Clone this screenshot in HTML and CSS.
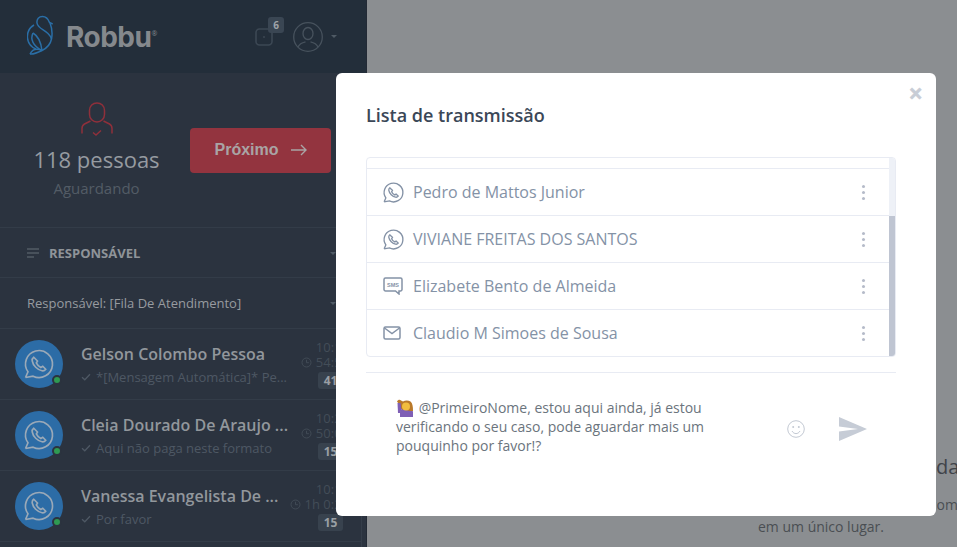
FILE: index.html
```html
<!DOCTYPE html>
<html>

<head>
    <title>Robbu</title>
    <link rel="stylesheet" href="styles.css">
</head>

<body>
    <svg class="defs" width="0" height="0">
        <symbol id="wa" viewBox="0 0 24 24">
            <path d="M3 21l1.65-3.8a9 9 0 1 1 3.4 2.9L3 21" />
            <path d="M8.500 7.500c-.8.6-1.200 1.400-1 2.500.5 3 3.500 6 6.500 6.500 1 .2 1.900-.2 2.500-1l-2-2-1.300.8c-1.300-.6-2.400-1.700-3-3l.8-1.300-2.500-2.500z" />
        </symbol>
        <symbol id="clock" viewBox="0 0 12 12">
            <circle cx="6" cy="6" r="4.9" />
            <path d="M6 3v3.2h2.6" />
        </symbol>
        <symbol id="check" viewBox="0 0 10 8">
            <path d="M1 4.2l2.8 2.6L9 1.2" />
        </symbol>
    </svg>

    <div class="app">
        <aside class="sidebar">
            <header class="top-bar">
                <svg class="logo-mark" viewBox="27 15 26 41" width="26" height="41">
                    <path d="M52.700 24L49.500 22.500C48 18.500 45.500 16.500 42.500 16.500C39 16.500 36.500 19 37 23C37.600 28 44 29.500 48 33.500C50 35.500 51 37 51.500 39" />
                    <path d="M50 23C52 28 52.500 34 51.500 39C50.500 44 47 48 42 50.500C38 52.500 34 54.500 30 54" />
                    <path d="M34 25C29 28 27 33 27.500 38C28 43 31 47 36 49" />
                    <path d="M33 33C30 39 33 46 42 50.500" />
                    <path d="M33 33C38 36 41 42 42 50.500" />
                    <path d="M30 54C32 50 36 48 42 50.500" />
                </svg>
                <span class="logo-text">Robbu</span><span class="logo-reg">®</span>
                <div class="top-actions">
                    <div class="tickets">
                        <svg viewBox="0 0 18 18" width="18" height="18">
                            <rect x="1" y="1" width="16" height="16" rx="3.500" />
                            <circle class="dot" cx="9" cy="9" r="0.800" />
                        </svg>
                        <span class="tickets-badge">6</span>
                    </div>
                    <svg class="user-icon" viewBox="0 0 30 30" width="30" height="30">
                        <circle cx="15" cy="15" r="14.300" />
                        <ellipse cx="15" cy="11.500" rx="5" ry="6" />
                        <path d="M5 25c1.500-3.500 4.500-4.500 7.500-5.200M25 25c-1.500-3.500-4.500-4.500-7.500-5.200" />
                    </svg>
                    <span class="caret"></span>
                </div>
            </header>

            <section class="summary">
                <div class="summary-info">
                    <svg class="person-icon" viewBox="0 0 32 36" width="32" height="36">
                        <path d="M16 1c-4.200 0-7.500 3-7.500 7.500v4c0 4 3.300 7.500 7.500 7.500s7.500-3.500 7.500-7.500v-4C23.500 4 20.200 1 16 1z" />
                        <path d="M9.500 19l-6 3C1.800 23 1 24.300 1 26.500v5M22.500 19l6 3c1.700 1 2.500 2.300 2.500 4.500v5" />
                        <path d="M12 30.500l3 2.500 5-4.500" />
                    </svg>
                    <div class="summary-count">118 pessoas</div>
                    <div class="summary-label">Aguardando</div>
                </div>
                <button class="next-btn">Próximo
                    <svg viewBox="0 0 16 12" width="16" height="12">
                        <path d="M0 6h15M10 1l5 5-5 5" />
                    </svg>
                </button>
            </section>

            <div class="filter-head">
                <svg viewBox="0 0 12 10" width="12" height="10">
                    <path d="M0 1h12M0 5h12M0 9h7" />
                </svg>
                <span class="filter-title">RESPONSÁVEL</span>
                <span class="caret"></span>
            </div>
            <div class="filter-value">
                <span>Responsável: [Fila De Atendimento]</span>
                <span class="caret"></span>
            </div>

            <div class="chat-list">
                <div class="chat-row">
                    <div class="avatar">
                        <svg class="wa-icon" width="36" height="36"><use href="#wa" /></svg>
                        <span class="online"></span>
                    </div>
                    <div class="chat-main">
                        <div class="chat-name">Gelson Colombo Pessoa</div>
                        <div class="chat-msg"><svg class="check" width="10" height="8"><use href="#check" /></svg><span>*[Mensagem Automática]* Pe...</span></div>
                    </div>
                    <div class="chat-meta">
                        <div class="chat-time">10:18</div>
                        <div class="chat-wait"><svg class="clock" width="11" height="11"><use href="#clock" /></svg>54:51</div>
                        <div class="chat-badge">41</div>
                    </div>
                </div>
                <div class="chat-row">
                    <div class="avatar">
                        <svg class="wa-icon" width="36" height="36"><use href="#wa" /></svg>
                        <span class="online"></span>
                    </div>
                    <div class="chat-main">
                        <div class="chat-name">Cleia Dourado De Araujo ...</div>
                        <div class="chat-msg"><svg class="check" width="10" height="8"><use href="#check" /></svg><span>Aqui não paga neste formato</span></div>
                    </div>
                    <div class="chat-meta">
                        <div class="chat-time">10:23</div>
                        <div class="chat-wait"><svg class="clock" width="11" height="11"><use href="#clock" /></svg>50:02</div>
                        <div class="chat-badge">15</div>
                    </div>
                </div>
                <div class="chat-row">
                    <div class="avatar">
                        <svg class="wa-icon" width="36" height="36"><use href="#wa" /></svg>
                        <span class="online"></span>
                    </div>
                    <div class="chat-main">
                        <div class="chat-name">Vanessa Evangelista De ...</div>
                        <div class="chat-msg"><svg class="check" width="10" height="8"><use href="#check" /></svg><span>Por favor</span></div>
                    </div>
                    <div class="chat-meta">
                        <div class="chat-time">10:12</div>
                        <div class="chat-wait"><svg class="clock" width="11" height="11"><use href="#clock" /></svg>1h 0:21</div>
                        <div class="chat-badge">15</div>
                    </div>
                </div>
            </div>
        </aside>

        <main class="content">
            <div class="welcome">
                <div class="welcome-title">Bem-vindo à caixa de entrada</div>
                <div class="welcome-text">Gerencie todos os seus atendimentos e chats com clientes<br>em um único lugar.</div>
            </div>
        </main>
    </div>

    <div class="modal">
        <span class="modal-close">×</span>
        <h2 class="modal-title">Lista de transmissão</h2>

        <div class="contact-box">
            <div class="contact-list">
                <div class="contact-cut"></div>
                <div class="contact">
                    <div class="contact-glyph"><svg class="contact-icon wa-glyph" width="25" height="25"><use href="#wa" /></svg></div>
                    <span class="contact-name">Pedro de Mattos Junior</span>
                    <span class="dots"><i></i><i></i><i></i></span>
                </div>
                <div class="contact">
                    <div class="contact-glyph"><svg class="contact-icon wa-glyph" width="25" height="25"><use href="#wa" /></svg></div>
                    <span class="contact-name">VIVIANE FREITAS DOS SANTOS</span>
                    <span class="dots"><i></i><i></i><i></i></span>
                </div>
                <div class="contact">
                    <div class="contact-glyph">
                        <svg class="contact-icon" viewBox="0 0 20 18" width="20" height="18">
                            <path d="M2.500 1h15A1.500 1.500 0 0 1 19 2.500v10a1.500 1.500 0 0 1-1.500 1.500H16v3l-3.500-3h-10A1.500 1.500 0 0 1 1 12.500v-10A1.500 1.500 0 0 1 2.500 1z" />
                            <text class="sms-text" x="10" y="10.200" text-anchor="middle">SMS</text>
                        </svg>
                    </div>
                    <span class="contact-name">Elizabete Bento de Almeida</span>
                    <span class="dots"><i></i><i></i><i></i></span>
                </div>
                <div class="contact">
                    <div class="contact-glyph">
                        <svg class="contact-icon" viewBox="0 0 18 14" width="18" height="14">
                            <rect x="1" y="1" width="16" height="12" rx="1.500" />
                            <path d="M1.500 2l7.500 5.500L16.500 2" />
                        </svg>
                    </div>
                    <span class="contact-name">Claudio M Simoes de Sousa</span>
                    <span class="dots"><i></i><i></i><i></i></span>
                </div>
            </div>
            <div class="scroll-track"><div class="scroll-thumb"></div></div>
        </div>

        <div class="composer">
            <div class="composer-text">
                <svg class="emoji" viewBox="0 0 18 18" width="18" height="18">
                    <path fill="#7f5fb5" d="M4 18v-5c0-2.500 2-3.500 5.500-3.500S17 10.500 17 13v5z" />
                    <path fill="#b9792a" d="M1 2.500C2 .6 4 .4 5 1.500l2 1c2-1.500 5.500-1.500 7.500 0 2 1.600 2.500 5 2.500 9.500H14l-9-2-1-3.500z" />
                    <path fill="#7f5fb5" d="M1.500 4h3l1 7-1.500 3H2z" />
                    <circle fill="#f2bd3e" cx="10" cy="7.500" r="4" />
                </svg>
                <span class="composer-first">@PrimeiroNome, estou aqui ainda, já estou</span><br>verificando o seu caso, pode aguardar mais um<br>pouquinho por favor!?
            </div>
            <svg class="smile" viewBox="0 0 18 18" width="18" height="18">
                <circle cx="9" cy="9" r="8.300" />
                <circle class="dot" cx="6.200" cy="7" r="1" />
                <circle class="dot" cx="11.800" cy="7" r="1" />
                <path d="M5 11c1 1.800 2.500 2.600 4 2.600s3-.8 4-2.600" />
            </svg>
            <svg class="send" viewBox="0 0 28 24" width="28" height="24">
                <path d="M0 0l28 12L0 24l0-9.500L19 12 0 9.500z" />
            </svg>
        </div>
    </div>
</body>

</html>
```

FILE: styles.css
```css
* {
    box-sizing: border-box;
}

html,
body {
    height: 100%;
    overflow: hidden;
}

body {
    font-family: "Open Sans", sans-serif;
    margin: 0;
    padding: 0;
    background: #8b8e91;
}

.defs {
    position: absolute;
}

.app {
    display: flex;
    height: 547px;
}

/* sidebar */
.sidebar {
    width: 367px;
    flex: none;
    background: #2b333f;
    border-right: 1px solid #232a35;
}

.top-bar {
    height: 73px;
    background: #232e3a;
    padding: 0 0 0 27px;
    display: flex;
    align-items: center;
}

.logo-mark {
    margin-bottom: 2px;
    fill: none;
    stroke: #2a6ea6;
    stroke-width: 1.500;
}

.logo-text {
    font-family: Inter, sans-serif;
    font-weight: 700;
    font-size: 28px;
    letter-spacing: -0.5px;
    color: #85898d;
    margin-left: 13px;
}

.logo-reg {
    font-size: 7px;
    color: #85898d;
    margin-bottom: 6px;
}

.top-actions {
    margin-left: auto;
    margin-right: 29px;
    display: flex;
    align-items: center;
}

.tickets {
    position: relative;
    display: flex;
    margin-top: 1px;
    margin-right: 20px;
}

.tickets svg {
    fill: none;
    stroke: #3c4854;
    stroke-width: 1.600;
}

.tickets svg .dot {
    fill: #4f5a65;
    stroke: none;
}

.tickets-badge {
    position: absolute;
    left: 13px;
    top: -11px;
    width: 16px;
    height: 16px;
    background: #3a4653;
    border-radius: 3px;
    color: #9fa4a9;
    font-size: 10px;
    font-weight: 700;
    line-height: 16px;
    text-align: center;
}

.user-icon {
    fill: none;
    stroke: #47525d;
    stroke-width: 1.300;
    margin-right: 8px;
}

.caret {
    width: 0;
    height: 0;
    border-left: 3px solid transparent;
    border-right: 3px solid transparent;
    border-top: 3px solid #4f5a65;
}

.summary {
    height: 155px;
    display: flex;
    border-bottom: 1px solid #333c48;
    padding: 29px 0 0 27px;
}

.summary-info {
    width: 138px;
    padding-left: 1px;
    text-align: center;
}

.person-icon {
    display: block;
    margin: 0 auto;
    fill: none;
    stroke: #8f303b;
    stroke-width: 1.500;
}

.summary-count {
    font-size: 22px;
    line-height: 30px;
    margin-top: 6px;
    color: #969ba1;
}

.summary-label {
    font-size: 15px;
    line-height: 20px;
    margin-top: 4px;
    color: #535c66;
}

.next-btn {
    width: 141px;
    height: 45px;
    margin: 26px 0 0 25px;
    padding: 0 0 2px 0;
    background: #93343f;
    border: 0;
    border-radius: 4px;
    color: #a9a4a5;
    font-family: "Liberation Sans", sans-serif;
    font-size: 16px;
    font-weight: 700;
    display: flex;
    align-items: center;
    justify-content: center;
    gap: 12px;
}

.next-btn svg {
    fill: none;
    stroke: #a9a4a5;
    stroke-width: 1.400;
}

.filter-head {
    height: 50px;
    padding: 1px 30px 0 27px;
    display: flex;
    align-items: center;
    border-bottom: 1px solid #333c48;
}

.filter-head svg {
    fill: none;
    stroke: #535c66;
    stroke-width: 1.300;
}

.filter-title {
    font-size: 13px;
    font-weight: 700;
    color: #8f9499;
    margin-left: 10px;
    flex: 1;
}

.filter-value {
    height: 51px;
    padding: 0 30px 0 27px;
    display: flex;
    align-items: center;
    justify-content: space-between;
    font-size: 13px;
    color: #979ba0;
    border-bottom: 1px solid #333c48;
}

.chat-list {
    width: 362px;
    height: 219px;
    border-right: 1px solid #343d49;
}

.chat-row {
    height: 71px;
    display: flex;
    align-items: center;
    padding: 0 12px 0 15px;
    border-bottom: 1px solid #333c48;
}

.avatar {
    position: relative;
    width: 48px;
    height: 48px;
    flex: none;
    border-radius: 50%;
    background: #2c6ca6;
    display: flex;
    align-items: center;
    justify-content: center;
}

.wa-icon {
    fill: none;
    stroke: #9aa9b8;
    stroke-width: 1.100;
}

.online {
    position: absolute;
    right: 1px;
    bottom: 3px;
    width: 10px;
    height: 10px;
    border-radius: 50%;
    background: #2f9a52;
    border: 2px solid #2b333f;
}

.chat-main {
    margin-left: 18px;
    min-width: 0;
    flex: 1;
    padding-top: 1px;
}

.chat-name {
    font-size: 16px;
    font-weight: 600;
    line-height: 22px;
    color: #92979c;
    white-space: nowrap;
}

.chat-msg {
    font-size: 13px;
    line-height: 20px;
    margin-top: 2px;
    color: #4e5864;
    white-space: nowrap;
    display: flex;
    align-items: center;
    gap: 5px;
}

.check {
    flex: none;
    fill: none;
    stroke: #4e5864;
    stroke-width: 1.300;
}

.chat-meta {
    flex: none;
    width: 62px;
    text-align: right;
    font-size: 13px;
    line-height: 15px;
    color: #434d58;
}

.chat-wait {
    display: flex;
    align-items: center;
    justify-content: flex-end;
    gap: 4px;
    white-space: nowrap;
}

.clock {
    flex: none;
    fill: none;
    stroke: #434d58;
    stroke-width: 1;
}

.chat-badge {
    width: 25px;
    height: 17px;
    margin: 2px 6px 0 auto;
    background: #38424e;
    border-radius: 3px;
    color: #9a9fa4;
    font-size: 12px;
    font-weight: 700;
    line-height: 17px;
    text-align: center;
}

/* main area behind the modal */
.content {
    flex: 1;
    min-width: 0;
    display: flex;
    justify-content: flex-end;
    overflow: hidden;
}

.welcome {
    flex: none;
    width: 400px;
    margin-right: -64px;
    padding-top: 453px;
    text-align: center;
    color: #3f4349;
}

.welcome-title {
    font-size: 20px;
    line-height: 28px;
}

.welcome-text {
    font-size: 14px;
    line-height: 22px;
    margin-top: 13px;
    white-space: nowrap;
    color: #4a4e53;
}

/* modal */
.modal {
    position: absolute;
    left: 336px;
    top: 73px;
    width: 600px;
    height: 443px;
    padding: 30px 40px 30px 30px;
    background: #ffffff;
    border-radius: 6px;
}

.modal-close {
    position: absolute;
    right: 14px;
    top: 7px;
    font-family: "Liberation Sans", sans-serif;
    font-size: 22px;
    font-weight: 700;
    line-height: 28px;
    color: #c8cdd6;
    -webkit-text-stroke: 0.6px #c8cdd6;
}

.modal-title {
    margin: 0 0 30px 0;
    font-size: 18px;
    font-weight: 600;
    line-height: 24px;
    color: #3b4757;
}

.contact-box {
    height: 200px;
    display: flex;
    border: 1px solid #e8ebf3;
    border-radius: 4px;
    overflow: hidden;
}

.contact-list {
    flex: 1;
}

.contact-cut {
    height: 11px;
    border-bottom: 1px solid #e8ebf3;
}

.contact {
    height: 47px;
    display: flex;
    align-items: center;
    padding: 0 24px 0 16px;
    border-bottom: 1px solid #e8ebf3;
}

.contact-glyph {
    width: 30px;
    flex: none;
    display: flex;
    align-items: center;
}

.contact-icon {
    flex: none;
    fill: none;
    stroke: #8492a6;
    stroke-width: 1.500;
}

.wa-glyph {
    margin-left: -2px;
    stroke-width: 1.300;
}

.sms-text {
    font-family: "Liberation Sans", sans-serif;
    font-size: 5.500px;
    font-weight: 700;
    fill: #8492a6;
    stroke: none;
}

.contact-name {
    flex: 1;
    font-size: 16px;
    color: #8492a6;
}

.dots {
    display: flex;
    flex-direction: column;
    gap: 3px;
}

.dots i {
    width: 3px;
    height: 3px;
    border-radius: 50%;
    background: #b5bbc9;
}

.scroll-track {
    width: 6px;
    flex: none;
    background: #eef1f7;
    padding-top: 58px;
}

.scroll-thumb {
    height: 100%;
    background: #bfc5d2;
}

.composer {
    margin-top: 15px;
    padding: 25px 0 0 30px;
    border-top: 1px solid #e8ebf3;
    display: flex;
    align-items: flex-start;
}

.composer-text {
    width: 372px;
    font-size: 14px;
    line-height: 19px;
    color: #6b747d;
    white-space: nowrap;
}

.emoji {
    vertical-align: -4px;
    margin-right: 1px;
}

.smile {
    flex: none;
    margin: 22px 0 0 19px;
    fill: none;
    stroke: #c3c9d3;
    stroke-width: 1;
}

.smile .dot {
    fill: #c3c9d3;
    stroke: none;
}

.send {
    flex: none;
    margin: 19px 0 0 34px;
    fill: #c6ccd6;
}
```
